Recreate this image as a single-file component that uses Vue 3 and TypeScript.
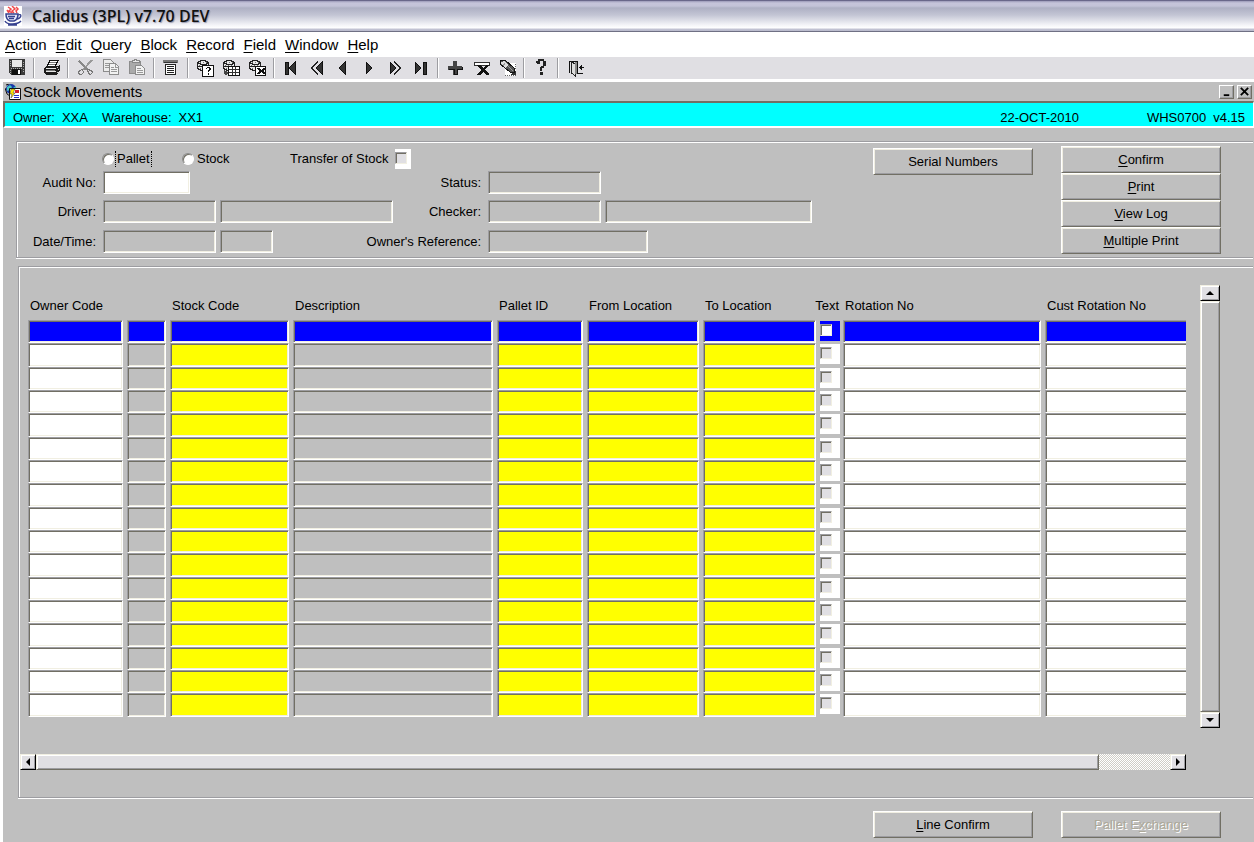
<script setup lang="ts">
import { ref } from 'vue'

interface Tool {
  icon: string
  label: string
  disabled?: boolean
}

interface Column {
  key: string
  title: string
  label: string
  tone: 'white' | 'grey' | 'yellow' | 'check'
}

const menus: string[] = ['Action', 'Edit', 'Query', 'Block', 'Record', 'Field', 'Window', 'Help']

const cylinder =
  '<path d="M2.500 4.500h1v-1h2v-1h5v1h2v1h1v6h-1v1h-2v1h-5v-1h-2v-1h-1z" fill="#e8e8e8" stroke="#222"/>' +
  '<path d="M3 5.500h2v1h6v-1h2M3 8.500h10" fill="none" stroke="#222"/>' +
  '<path d="M5 4.500h1m2 0h1m2 0h1M4 7.500h1m2 0h1m2 0h1M5 10.500h1m2 0h1" stroke="#777"/>'

const icons: Record<string, string> = {
  save:
    '<path d="M2 1h16v16H4l-2-2z" fill="#3a3a3a"/><path d="M5 2h10v7H5z" fill="#e8e8e8"/>' +
    '<path d="M5 11h9v6H5z" fill="#111"/><path d="M11 12h2v4h-2z" fill="#fff"/>' +
    '<path d="M3 3.500h1M3 5.500h1M3 7.500h1M16 4.500h1M16 6.500h1M16 8.500h1M16 11.500h1M16 13.500h1M3 12.500h1M3 14.500h1M4 10.500h1m1 0h1m1 0h1m1 0h1m1 0h1m1 0h1" stroke="#aaa"/>',
  print:
    '<path d="M9 2.500h8l-3 6H6z" fill="#fff" stroke="#111"/><path d="M9 4.500h6M8 6.500h6" stroke="#777"/>' +
    '<path d="M5 8h12l2-2v6l-3 5H5l-2-2v-5z" fill="#1c1c1c"/>' +
    '<path d="M5 10.500h10M5 13.500h10" stroke="#e8e8e8"/><path d="M5 12h9" stroke="#777"/>' +
    '<path d="M16 9.500h1m0 2h1m-2 3h1" stroke="#ccc"/>',
  cut:
    '<path d="M4 3l9 9" stroke="#888" stroke-width="2"/><path d="M17 2l-9 10" stroke="#999" stroke-width="2"/>' +
    '<path d="M7.500 11.500l-3 1-1 2 1 2 2 0 2-2zM12.500 11.500l4 1 1 2-2 2-2-1z" fill="none" stroke="#777"/><path d="M9 9h3v3H9z" fill="#888"/>',
  copy:
    '<path d="M2.500 1.500h7l3 3v9h-10z" fill="#ececec" stroke="#8c8c8c"/><path d="M4 5.500h5M4 7.500h5M4 9.500h5" stroke="#999"/>' +
    '<path d="M8.500 5.500h6l3 3v8h-9z" fill="#f2f2f2" stroke="#8c8c8c"/><path d="M14.500 6v3h3M10 9.500h3M10 11.500h6M10 13.500h6" fill="none" stroke="#999"/>',
  paste:
    '<path d="M2.500 3.500h11v12h-11z" fill="#aaa" stroke="#8c8c8c"/><path d="M5 4h7V2H9V1H7v1H5z" fill="#e8e8e8" stroke="#888"/>' +
    '<path d="M8.500 7.500h6l3 3v6h-9z" fill="#f2f2f2" stroke="#8c8c8c"/><path d="M10 10.500h4M10 12.500h6M10 14.500h6" stroke="#999"/>',
  list:
    '<path d="M2 2h15v3H2z" fill="#777"/><path d="M3 4.500h13" stroke="#333"/>' +
    '<path d="M4.500 6.500h10v10h-10z" fill="#fff" stroke="#222"/><path d="M6 8.500h7M6 10.500h7M6 12.500h7M6 14.500h7" stroke="#222"/>',
  enterQuery:
    cylinder +
    '<path d="M7.500 7.500h11v11h-11z" fill="#fff" stroke="#111"/><path d="M11 10h1V9h3v1h1v2h-1v1h-1v1h-1v-2h1v-2h-2v1h-1zM13 15h1v2h-1z" fill="#111"/>',
  executeQuery:
    cylinder +
    '<path d="M7.500 8.500h11v9h-11z" fill="#fff" stroke="#111"/><path d="M8 11.500h10M8 14.500h10M11.500 9v8M14.500 9v8" stroke="#333"/>' +
    '<path d="M3.500 12v3H6M4 13l3 2-3 2z" fill="#444" stroke="#444"/>',
  cancelQuery:
    cylinder +
    '<path d="M8.500 8.500h10v9h-10z" fill="#fff" stroke="#111"/><path d="M10 10h2l2 2 2-2h2v1l-2 2 2 2v1h-2l-2-2-2 2h-2v-1l2-2-2-2z" fill="#111"/>',
  first: '<path d="M4 4h3v12H4zM14 4v12l-6-6z" fill="#333" stroke="#111"/>',
  back: '<path d="M15 4v12l-6-6z" fill="#333" stroke="#111"/><path d="M11 3.500l-6.500 6.500 6.500 6.500" fill="none" stroke="#222" stroke-width="2"/><path d="M12.500 4l-5.500 6 5.500 6" fill="none" stroke="#e0dfe3"/>',
  prev: '<path d="M12 4v12l-6-6z" fill="#333" stroke="#111"/>',
  next: '<path d="M7 4v12l6-6z" fill="#333" stroke="#111"/>',
  forward: '<path d="M5 4v12l6-6z" fill="#333" stroke="#111"/><path d="M9 3.500l6.500 6.500-6.500 6.500" fill="none" stroke="#222" stroke-width="2"/><path d="M7.500 4l5.500 6-5.500 6" fill="none" stroke="#e0dfe3"/>',
  last: '<path d="M4 4v12l6-6zM12 4h3v12h-3z" fill="#333" stroke="#111"/>',
  insert: '<path d="M8 3h4v5h5v4h-5v5H8v-5H3V8h5z" fill="#444"/><path d="M4 11.500h5v5h3v-5h5V9" fill="none" stroke="#111"/>',
  remove:
    '<path d="M3.500 4.500h15v3h-15z" fill="#fff" stroke="#333"/><path d="M6 7h3l3 3 3-3h3l-4 5 4 4v1h-3l-3-3-3 3H6v-1l4-4-4-4z" fill="#111"/>',
  clear:
    '<path d="M8 5h11v13H8z" fill="#fff"/><path d="M8 17.500h1m1 0h1m1 0h1m1 0h1m1 0h1m1 0h1M18.500 6v1m0 1v1m0 1v1" stroke="#666"/><path d="M19 13v4h-6z" fill="#333"/>' +
    '<path d="M3 3l3-1h2l9 8v4h-4L3 6z" fill="#555" stroke="#111"/><path d="M4 4l3-1 4 4-3 3-4-4z" fill="#ddd"/><path d="M8 5l-2 3M11 8l5 5" stroke="#999"/>',
  help: '<path d="M5 5V3h2V1h6v2h2v5h-2v2h-2v3H9v-4h1V8h2V3H9v3H6V5zM9 14h3v3H9z" fill="#222"/>',
  exit:
    '<path d="M4.500 15V3.500H12V16" fill="none" stroke="#111"/><path d="M6.500 4l4 2v12l-4-3z" fill="#ddd" stroke="#222"/>' +
    '<path d="M10 4h2v12h-2z" fill="#888"/><path d="M12 15.500h6M14 9.500h5M15.500 8v3M16.500 7v5" stroke="#111"/>',
}

const toolGroups: Tool[][] = [
  [{ icon: 'save', label: 'Save' }],
  [{ icon: 'print', label: 'Print screen' }],
  [
    { icon: 'cut', label: 'Cut', disabled: true },
    { icon: 'copy', label: 'Copy', disabled: true },
    { icon: 'paste', label: 'Paste', disabled: true },
  ],
  [{ icon: 'list', label: 'List of values' }],
  [
    { icon: 'enterQuery', label: 'Enter query' },
    { icon: 'executeQuery', label: 'Execute query' },
    { icon: 'cancelQuery', label: 'Cancel query' },
  ],
  [
    { icon: 'first', label: 'First record' },
    { icon: 'back', label: 'Previous page' },
    { icon: 'prev', label: 'Previous record' },
    { icon: 'next', label: 'Next record' },
    { icon: 'forward', label: 'Next page' },
    { icon: 'last', label: 'Last record' },
  ],
  [
    { icon: 'insert', label: 'Insert record' },
    { icon: 'remove', label: 'Delete record' },
    { icon: 'clear', label: 'Clear record' },
  ],
  [{ icon: 'help', label: 'Help' }],
  [{ icon: 'exit', label: 'Exit' }],
]

const columns: Column[] = [
  { key: 'owner', title: 'Owner Code', label: 'Owner code', tone: 'white' },
  { key: 'flag', title: '', label: 'Flag', tone: 'grey' },
  { key: 'stock', title: 'Stock Code', label: 'Stock code', tone: 'yellow' },
  { key: 'description', title: 'Description', label: 'Description', tone: 'grey' },
  { key: 'pallet', title: 'Pallet ID', label: 'Pallet ID', tone: 'yellow' },
  { key: 'from', title: 'From Location', label: 'From location', tone: 'yellow' },
  { key: 'to', title: 'To Location', label: 'To location', tone: 'yellow' },
  { key: 'text', title: 'Text', label: 'Text', tone: 'check' },
  { key: 'rotation', title: 'Rotation No', label: 'Rotation number', tone: 'white' },
  { key: 'cust', title: 'Cust Rotation No', label: 'Customer rotation number', tone: 'white' },
]

const rowCount = 17
const activeRow = ref(1)
const mode = ref('')
const actions: string[] = ['Confirm', 'Print', 'View Log', 'Multiple Print']
</script>

<template>
  <div class="app">
    <header class="titlebar">
      <svg class="logo" viewBox="0 0 18 20" aria-hidden="true">
        <path d="M0 0h18v20H0z" fill="#fff" />
        <path d="M4 1l3 2-2 2 3 2M8 0l3 3-3 2 2 2M12 1l2 2-2 2 1 2M3 4l2 3" fill="none" stroke="#f0484a" stroke-width="1.500" />
        <path d="M2 8h12c0 4-1 6-4 7H6c-3-1-4-3-4-7z" fill="#e6e8fa" stroke="#36418f" stroke-width="1.500" />
        <path d="M14 9c4-2 4 3-1 4M4 10.500h7M5 12.500h5" fill="none" stroke="#36418f" stroke-width="1.300" />
        <path d="M1 15c2 4 12 4 16 0M4 19h9" fill="none" stroke="#36418f" stroke-width="1.500" />
      </svg>
      <h1>Calidus (3PL) v7.70 DEV</h1>
    </header>

    <nav class="menubar" aria-label="Main menu">
      <button v-for="m in menus" :key="m" type="button"><u>{{ m[0] }}</u>{{ m.slice(1) }}</button>
    </nav>

    <div class="toolbar" role="toolbar" aria-label="Tools">
      <div v-for="(group, g) in toolGroups" :key="g" class="tool-group">
        <button v-for="t in group" :key="t.icon" type="button" :aria-label="t.label" :disabled="t.disabled">
          <svg viewBox="0 0 20 20" shape-rendering="crispEdges" aria-hidden="true" v-html="icons[t.icon]"></svg>
        </button>
      </div>
    </div>

    <main class="window">
      <div class="window-title">
        <svg class="window-icon" viewBox="0 0 16 16" aria-hidden="true">
          <circle cx="6" cy="5" r="5" fill="#1838a8" />
          <path d="M2 3l3-2 2 2-2 3-3 1zM8 4l3-2v3z" fill="#49c4c4" />
          <path d="M1 1l3-1M0 4l2 6 3 2" stroke="#111" fill="none" />
          <path d="M4.500 4.500h11v11h-11z" fill="#fff" stroke="#111" />
          <path d="M6 5h4l-2 4h2l-4 5 1-4H5z" fill="#ffe600" stroke="#333" stroke-width=".5" />
          <path d="M10 6h4v3h-4z" fill="#d3202c" />
          <path d="M9 11.500h5M9 13.500h5" stroke="#2733c8" />
        </svg>
        <h2>Stock Movements</h2>
        <div class="window-controls">
          <button type="button" aria-label="Minimise">
            <svg viewBox="0 0 12 12" aria-hidden="true"><path d="M3 9h6v2H3z" /></svg>
          </button>
          <button type="button" aria-label="Close">
            <svg viewBox="0 0 12 12" aria-hidden="true"><path d="M2 2l8 8M10 2l-8 8" fill="none" stroke="#000" stroke-width="2" /></svg>
          </button>
        </div>
      </div>

      <div class="context">
        <span class="pair"><span>Owner:</span><span>XXA</span></span>
        <span class="pair"><span>Warehouse:</span><span>XX1</span></span>
        <span class="date">22-OCT-2010</span>
        <span class="pair"><span>WHS0700</span><span>v4.15</span></span>
      </div>

      <section class="panel details" aria-label="Movement details">
        <div class="fields">
          <div class="options">
            <span class="choice">
              <input id="mode-pallet" v-model="mode" type="radio" name="mode" value="pallet" />
              <label for="mode-pallet" class="focused">Pallet</label>
            </span>
            <span class="choice">
              <input id="mode-stock" v-model="mode" type="radio" name="mode" value="stock" />
              <label for="mode-stock">Stock</label>
            </span>
            <span class="transfer">
              <label for="transfer">Transfer of Stock</label>
              <span class="checkwrap"><input id="transfer" type="checkbox" /></span>
            </span>
          </div>

          <label class="caption" for="audit">Audit No:</label>
          <div class="entry"><input id="audit" class="field white w-audit" type="text" /></div>
          <label class="caption" for="status">Status:</label>
          <div class="entry"><input id="status" class="field w-code" type="text" readonly /></div>

          <label class="caption" for="driver">Driver:</label>
          <div class="entry">
            <input id="driver" class="field w-code" type="text" readonly />
            <input class="field w-driver" type="text" aria-label="Driver name" readonly />
          </div>
          <label class="caption" for="checker">Checker:</label>
          <div class="entry">
            <input id="checker" class="field w-code" type="text" readonly />
            <input class="field w-checker" type="text" aria-label="Checker name" readonly />
          </div>

          <label class="caption" for="date">Date/Time:</label>
          <div class="entry">
            <input id="date" class="field w-code" type="text" readonly />
            <input class="field w-time" type="text" aria-label="Time" readonly />
          </div>
          <label class="caption" for="reference">Owner's Reference:</label>
          <div class="entry"><input id="reference" class="field w-reference" type="text" readonly /></div>
        </div>

        <button type="button" class="push serial">Serial Numbers</button>
        <div class="stack">
          <button v-for="a in actions" :key="a" type="button" class="push"><u>{{ a[0] }}</u>{{ a.slice(1) }}</button>
        </div>
      </section>

      <section class="panel lines" aria-label="Movement lines">
        <div class="viewport">
          <table>
            <colgroup>
              <col v-for="c in columns" :key="c.key" :class="'col-' + c.key" />
            </colgroup>
            <thead>
              <tr>
                <th v-for="c in columns" :key="c.key" scope="col">
                  <span :class="{ 'flush-right': c.tone === 'check' }">{{ c.title }}</span>
                </th>
              </tr>
            </thead>
            <tbody>
              <tr v-for="r in rowCount" :key="r" :class="{ active: r === activeRow }" @focusin="activeRow = r">
                <td v-for="c in columns" :key="c.key">
                  <span v-if="c.tone === 'check'" class="checkcell">
                    <input type="checkbox" :aria-label="`${c.label}, line ${r}`" />
                  </span>
                  <input v-else type="text" :class="['field', c.tone]" :aria-label="`${c.label}, line ${r}`" />
                </td>
              </tr>
            </tbody>
          </table>
        </div>

        <div class="vscroll">
          <button type="button" class="arrow" aria-label="Scroll up">
            <svg viewBox="0 0 8 8" aria-hidden="true"><path d="M4 2l4 4H0z" /></svg>
          </button>
          <div class="vthumb"></div>
          <button type="button" class="arrow" aria-label="Scroll down">
            <svg viewBox="0 0 8 8" aria-hidden="true"><path d="M4 6l4-4H0z" /></svg>
          </button>
        </div>

        <div class="hscroll">
          <button type="button" class="arrow" aria-label="Scroll left">
            <svg viewBox="0 0 8 8" aria-hidden="true"><path d="M2 4l4-4v8z" /></svg>
          </button>
          <div class="hthumb"></div>
          <div class="track"></div>
          <button type="button" class="arrow" aria-label="Scroll right">
            <svg viewBox="0 0 8 8" aria-hidden="true"><path d="M6 4L2 0v8z" /></svg>
          </button>
        </div>
      </section>

      <footer class="footer">
        <button type="button" class="push"><u>L</u>ine Confirm</button>
        <button type="button" class="push" disabled>Pallet E<u>x</u>change</button>
      </footer>
    </main>
  </div>
</template>

<style>
body {
  margin: 0;
  background: #fff;
}
</style>

<style scoped>
.app {
  display: flex;
  flex-direction: column;
  min-height: 100vh;
  background: #fff;
  color: #000;
  font-family: "Liberation Sans", Arial, sans-serif;
  font-size: 13px;
  line-height: 16px;
}
.app *,
.app *::before {
  box-sizing: border-box;
}
button,
input {
  margin: 0;
  padding: 0;
  border: 0;
  border-radius: 0;
  background: none;
  color: inherit;
  font: inherit;
}
h1,
h2 {
  margin: 0;
}
u {
  text-underline-offset: 2px;
  text-decoration-skip-ink: none;
}

.titlebar {
  display: flex;
  align-items: center;
  gap: 10px;
  height: 32px;
  padding-left: 4px;
  border-top: 1px solid #69678a;
  border-bottom: 1px solid #6f7084;
  background: linear-gradient(#9b99b8 0, #c5c4da 2px, #c3c3d8 5px, #aeb0c4 7px, #c3c5d4 14px, #f4f4f8 24px, #fff 27px, #c4c4d4 28px, #b9bacd 30px);
}
.logo {
  width: 18px;
  height: 20px;
}
h1 {
  color: #111;
  font: 600 16px/20px "Open Sans", "Noto Sans", sans-serif;
  text-shadow: 1px 1px 1px #9a9cb0;
}

.menubar {
  display: flex;
  align-items: center;
  gap: 9px;
  height: 25px;
  padding-left: 5px;
}
.menubar button {
  font-size: 15px;
  line-height: 20px;
}

.toolbar {
  display: flex;
  align-items: center;
  height: 22px;
  padding-left: 4px;
  background: #e0dfe3;
}
.tool-group {
  display: flex;
  align-items: center;
}
.tool-group + .tool-group::before {
  content: "";
  width: 2px;
  height: 20px;
  margin: 0 3px;
  border-left: 1px solid #9d9da1;
  border-right: 1px solid #fff;
}
.tool-group button {
  display: flex;
  justify-content: center;
  width: 26px;
}
.tool-group svg {
  width: 20px;
  height: 20px;
}

.window {
  flex: 1;
  margin: 3px 0 0 3px;
  background: #bfbfbf;
}
.window-title {
  display: flex;
  align-items: center;
  gap: 2px;
  height: 19px;
  padding: 0 2px;
}
.window-icon {
  width: 16px;
  height: 16px;
}
h2 {
  font-size: 15px;
  font-weight: normal;
  line-height: 18px;
}
.window-controls {
  display: flex;
  gap: 3px;
  margin-left: auto;
}
.window-controls button {
  display: grid;
  place-items: center;
  width: 15px;
  height: 14px;
  border: 1px solid;
  border-color: #fff #716f64 #716f64 #fff;
  box-shadow: inset -1px -1px #9d9da1;
}
.window-controls svg {
  width: 11px;
  height: 11px;
}

.context {
  display: flex;
  align-items: flex-end;
  gap: 14px;
  height: 27px;
  padding: 0 8px;
  border: solid;
  border-width: 2px 1px 2px 2px;
  border-color: #716f64 #fff #fff #716f64;
  background: #0ff;
}
.pair {
  display: flex;
  gap: 7px;
}
.date {
  margin-left: auto;
  margin-right: 54px;
}

.panel {
  border: solid #9d9da1;
  border-width: 1px 0 1px 1px;
  box-shadow: inset 1px 1px #fff, 0 1px #fff;
}

.details {
  display: flex;
  align-items: flex-start;
  margin: 13px 1px 0 13px;
  padding: 5px 32px 0 1px;
}
.fields {
  display: grid;
  grid-template-columns: 79px 290px 83px 325px;
  grid-template-rows: 24px 29px 30px 27px;
  column-gap: 6px;
}
.options {
  grid-column: 1 / -1;
  display: flex;
  align-items: center;
  height: 20px;
  margin-top: 2px;
  padding-left: 84px;
}
.choice {
  display: flex;
  align-items: center;
  width: 80px;
  gap: 1px;
}
.choice label {
  padding: 0 1px;
  border: dotted transparent;
  border-width: 0 1px;
}
.choice label.focused {
  border-color: #000;
}
.choice input {
  appearance: none;
  width: 12px;
  height: 12px;
  border: 1px solid;
  border-color: #8a8a8a #fff #fff #8a8a8a;
  border-radius: 50%;
  background: #fff;
  box-shadow: inset 1px 1px #716f64;
}
.choice input:checked {
  background: radial-gradient(#000 2px, #fff 3px);
}
.transfer {
  display: flex;
  align-items: center;
  gap: 6px;
  margin-left: 28px;
}
.checkwrap {
  display: flex;
  width: 16px;
  height: 20px;
  padding-top: 3px;
  background: #fff;
}
.checkwrap input,
.checkcell input {
  appearance: none;
  flex: none;
  width: 12px;
  height: 12px;
  border: 1px solid;
  border-color: #9d9da1 #f1efe2 #f1efe2 #9d9da1;
  background: #e0dfe3;
  box-shadow: inset 1px 1px #716f64;
}
.checkwrap input:checked,
.checkcell input:checked {
  background: #444;
}
.caption {
  display: flex;
  align-items: center;
  justify-content: flex-end;
  height: 23px;
  padding-right: 1px;
  white-space: nowrap;
}
.entry {
  display: flex;
  gap: 4px;
}
.field {
  display: block;
  width: 100%;
  height: 23px;
  padding: 0 3px;
  border: 1px solid;
  border-color: #9d9da1 #fff #fff #9d9da1;
  box-shadow: inset 1px 1px #716f64, inset -1px -1px #f1efe2;
}
.field.white {
  background: #fff;
}
.field.yellow {
  background: #ff0;
}
.w-audit {
  width: 87px;
}
.w-code {
  width: 113px;
}
.w-driver {
  width: 173px;
}
.w-checker {
  width: 207px;
}
.w-time {
  width: 53px;
}
.w-reference {
  width: 160px;
}

.push {
  width: 160px;
  height: 27px;
  border: 1px solid;
  border-color: #fff #716f64 #716f64 #fff;
  box-shadow: inset 1px 1px #f1efe2, inset -1px -1px #9d9da1;
  text-align: center;
  white-space: nowrap;
}
.push:disabled {
  color: #aca899;
  text-shadow: 1px 1px #fff;
}
.serial {
  margin-left: auto;
  margin-top: 1px;
}
.stack {
  display: flex;
  flex-direction: column;
  margin: -1px 0 3px 28px;
}

.lines {
  display: grid;
  grid-template-columns: minmax(0, 1fr) 20px;
  column-gap: 14px;
  row-gap: 26px;
  margin: 8px 1px 0 15px;
  padding: 18px 33px 27px 1px;
}
.viewport {
  overflow: hidden;
  padding: 0 0 11px 8px;
}
table {
  width: 1217px;
  table-layout: fixed;
  border-collapse: collapse;
}
.col-owner {
  width: 99px;
}
.col-flag {
  width: 43px;
}
.col-stock {
  width: 123px;
}
.col-description {
  width: 204px;
}
.col-pallet {
  width: 90px;
}
.col-from {
  width: 116px;
}
.col-to {
  width: 117px;
}
.col-text {
  width: 23px;
}
.col-rotation {
  width: 202px;
}
th {
  height: 35px;
  padding: 6px 0 0 2px;
  font-weight: normal;
  text-align: left;
  white-space: nowrap;
}
.flush-right {
  display: flex;
  justify-content: flex-end;
  padding-right: 4px;
}
td {
  height: 23px;
  padding: 0 4px 0 0;
  vertical-align: top;
}
tbody tr:nth-child(3n + 2) td,
tbody tr:nth-child(3n + 2) .field {
  height: 24px;
}
.checkcell {
  display: flex;
  width: 20px;
  height: 20px;
  margin-top: 1px;
  padding-top: 3px;
  background: #fff;
}
.active .field,
.active .checkcell {
  background: #00f;
}
.active .checkcell input {
  background: #fff;
}

.arrow {
  display: grid;
  place-items: center;
  flex: none;
  width: 16px;
  height: 16px;
  border: 1px solid;
  border-color: #f1efe2 #000 #000 #f1efe2;
  background: #e0dfe3;
  box-shadow: inset 1px 1px #fff, inset -1px -1px #9d9da1;
}
.arrow svg {
  width: 8px;
  height: 8px;
}
.vscroll {
  display: flex;
  flex-direction: column;
}
.vscroll .arrow {
  width: 20px;
}
.vthumb,
.hthumb {
  border: 1px solid;
  border-color: #f1efe2 #716f64 #716f64 #f1efe2;
  box-shadow: inset 1px 1px #fff, inset -1px -1px #9d9da1;
}
.vthumb {
  flex: 1;
}
.hscroll {
  display: flex;
}
.hthumb {
  flex: 15;
  background: #e0dfe3;
}
.track {
  flex: 1;
  background: repeating-conic-gradient(#fff 0 25%, #cfcdc6 0 50%) 0 0 / 2px 2px;
}

.footer {
  display: flex;
  justify-content: flex-end;
  gap: 28px;
  padding: 13px 33px 4px 0;
}
</style>
